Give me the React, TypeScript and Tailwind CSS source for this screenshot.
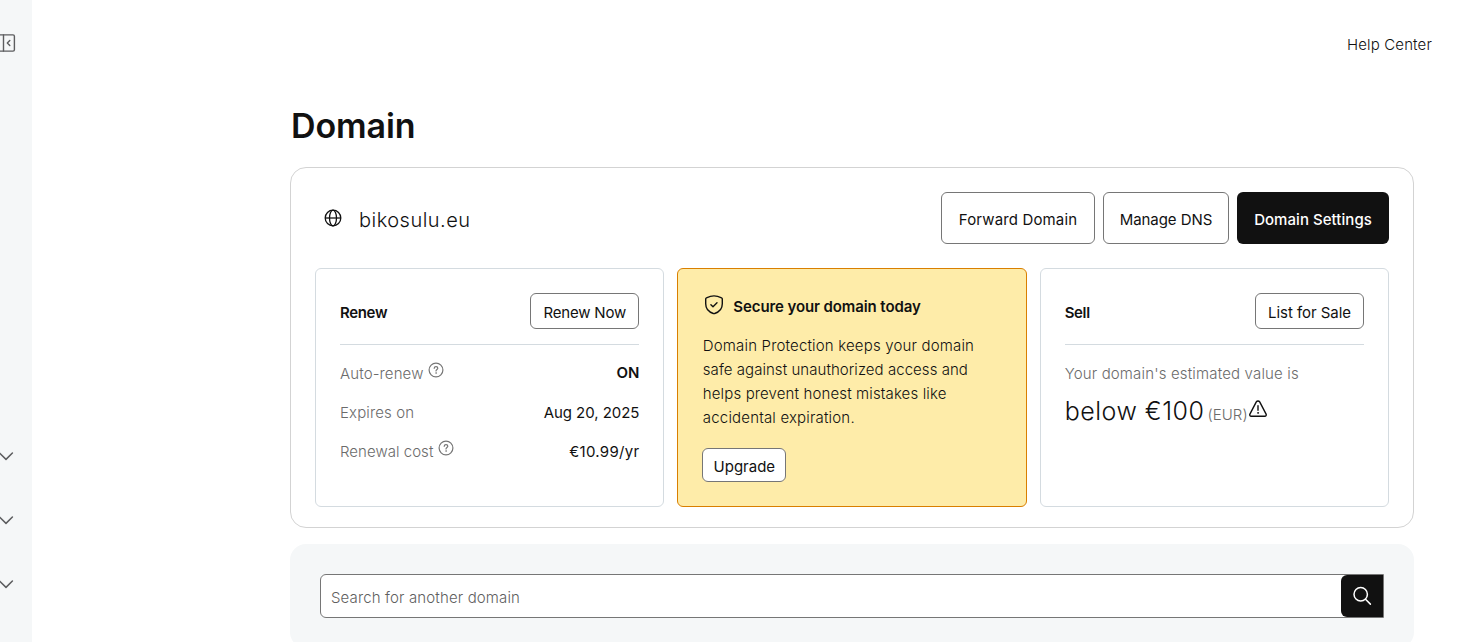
import type { ReactNode } from "react";

function ChevronDown() {
  return (
    <svg className="block" width="14" height="10" viewBox="0 0 14 10" fill="none" stroke="#5c5d5f" strokeWidth="1.5" strokeLinecap="round" strokeLinejoin="round">
      <path d="M-.5 2 6 8.400 12.400 2" />
    </svg>
  );
}

function CollapseIcon() {
  return (
    <svg className="block" width="16" height="18" viewBox="0 0 16 18" fill="none" stroke="#5c5d5f" strokeWidth="1.4" strokeLinecap="round" strokeLinejoin="round">
      <rect x="-3" y=".9" width="17.400" height="16.200" rx="1.400" />
      <path d="M3.500 1v16M9.800 6.500 7.300 9l2.500 2.500" />
    </svg>
  );
}

function GlobeIcon() {
  return (
    <svg className="block shrink-0" width="18" height="18" viewBox="0 0 18 18" fill="none" stroke="#111" strokeWidth="1.300">
      <circle cx="9" cy="9" r="7.800" />
      <ellipse cx="9" cy="9" rx="3.500" ry="7.800" />
      <path d="M1.200 9h15.600" />
    </svg>
  );
}

function QuestionIcon() {
  return (
    <svg className="block shrink-0" width="16" height="16" viewBox="0 0 16 16" fill="none" stroke="#767676" strokeWidth="1.200" strokeLinecap="round" strokeLinejoin="round">
      <circle cx="8" cy="8" r="6.900" />
      <path d="M6.200 6.300C6.300 5.200 7 4.700 8 4.700c1.100 0 1.800.6 1.800 1.500C9.800 7.400 8 7.500 8 8.900" />
      <circle cx="8" cy="11" r=".4" fill="#767676" strokeWidth=".6" />
    </svg>
  );
}

function ShieldIcon() {
  return (
    <svg className="block shrink-0" width="20" height="20" viewBox="0 0 20 20" fill="none" stroke="#111" strokeWidth="1.400" strokeLinecap="round" strokeLinejoin="round">
      <path d="M10 .9c2.600 0 5.200.8 7.600 1.900.5.2.7.6.7 1.100v4.900c0 4.600-3.200 8.300-7.600 9.700a2.400 2.400 0 0 1-1.400 0C4.900 17.100 1.700 13.400 1.700 8.800V3.900c0-.5.2-.9.7-1.100C4.800 1.700 7.400.9 10 .9Z" />
      <path d="m6.900 9.700 2.100 2.100 4-4" />
    </svg>
  );
}

function WarningIcon() {
  return (
    <svg className="block shrink-0" width="20" height="18" viewBox="0 0 20 18" fill="none" stroke="#111" strokeWidth="1.400" strokeLinecap="round" strokeLinejoin="round">
      <path d="M8.300 1.900a2 2 0 0 1 3.400 0l6.400 12.200a1.500 1.500 0 0 1-1.300 2.200H3.200a1.500 1.500 0 0 1-1.300-2.200Z" />
      <path d="M10 5.700v4.600" />
      <circle cx="10" cy="12.900" r=".55" fill="#111" strokeWidth=".6" />
    </svg>
  );
}

function SearchIcon() {
  return (
    <svg className="block" width="20" height="20" viewBox="0 0 20 20" fill="none" stroke="#fff" strokeWidth="1.500" strokeLinecap="round">
      <circle cx="8.700" cy="8.300" r="6.700" />
      <path d="m13.500 13.200 4.900 4.900" />
    </svg>
  );
}

function OutlineButton({ className, children }: { className: string; children: ReactNode }) {
  return (
    <button className={`flex shrink-0 items-center justify-center whitespace-nowrap rounded-md border border-[#767676] bg-white pt-[3px] text-[#111] ${className}`}>
      {children}
    </button>
  );
}

function DetailRow({ label, labelClass, help, value, valueClass }: { label: string; labelClass: string; help?: boolean; value: string; valueClass: string }) {
  return (
    <div className="flex h-[39px] items-center justify-between">
      <div className="flex items-center">
        <span className={`font-light text-[#6b6b6b] ${labelClass}`}>{label}</span>
        {help && (
          <span className="-mt-[7px] ml-[5px]">
            <QuestionIcon />
          </span>
        )}
      </div>
      <span className={valueClass}>{value}</span>
    </div>
  );
}

export default function App() {
  return (
    <div className="flex h-[642px] w-full overflow-hidden bg-white font-['Inter',sans-serif] text-[15px] leading-6 text-[#111]">
      <aside className="flex w-8 shrink-0 flex-col bg-[#f5f7f8] pt-[34px]">
        <CollapseIcon />
        <nav className="mt-[399px] flex flex-col gap-[54px]">
          <ChevronDown />
          <ChevronDown />
          <ChevronDown />
        </nav>
      </aside>

      <div className="flex min-w-0 flex-1 flex-col">
        <header className="flex h-[103px] shrink-0 justify-end pr-[51px] pt-[33px]">
          <a className="font-light tracking-[0.15px]">Help Center</a>
        </header>

        <main className="ml-[258px] flex w-[1124px] shrink-0 flex-col">
          <h1 className="h-11 pl-px text-[34px] font-semibold leading-[45px] tracking-[-0.1px]">Domain</h1>

          <section className="mt-5 h-[361px] rounded-2xl border border-[#d3d3d3] p-6">
            <div className="flex h-[52px] items-center justify-between">
              <div className="flex items-center gap-[17px] pl-[9px]">
                <GlobeIcon />
                <span className="pt-[3px] text-[20px] font-light tracking-[0.48px]">bikosulu.eu</span>
              </div>
              <div className="flex gap-2">
                <OutlineButton className="h-[52px] w-[154px] tracking-[0.14px]">Forward Domain</OutlineButton>
                <OutlineButton className="h-[52px] w-[126px] tracking-[-0.05px]">Manage DNS</OutlineButton>
                <button className="flex h-[52px] w-[152px] items-center justify-center rounded-md bg-[#111] pt-[3px] font-medium tracking-[0.05px] text-white">Domain Settings</button>
              </div>
            </div>

            <div className="mt-6 grid h-[239px] grid-cols-3 gap-[13px]">
              <div className="rounded-md border border-[#d4dbe0] p-6">
                <div className="flex h-[52px] items-start justify-between border-b border-[#d4dbe0]">
                  <h2 className="pt-2 font-semibold tracking-[-0.35px]">Renew</h2>
                  <OutlineButton className="h-9 w-[109px] tracking-[-0.2px]">Renew Now</OutlineButton>
                </div>
                <div className="mt-[9px] flex flex-col">
                  <DetailRow label="Auto-renew" labelClass="tracking-[0.12px]" help value="ON" valueClass="-mt-[2px] font-semibold" />
                  <DetailRow label="Expires on" labelClass="tracking-[0.12px]" value="Aug 20, 2025" valueClass="tracking-[-0.05px]" />
                  <DetailRow label="Renewal cost" labelClass="tracking-[0.04px]" help value="€10.99/yr" valueClass="tracking-[0.28px]" />
                </div>
              </div>

              <div className="rounded-md border border-[#d97f00] bg-[#feeca9] px-6 pt-[22px]">
                <div className="flex items-center gap-[9px] pl-[2px]">
                  <ShieldIcon />
                  <h2 className="pt-1 font-semibold tracking-[-0.1px]">Secure your domain today</h2>
                </div>
                <p className="mt-[15px] whitespace-nowrap pl-[0.5px] font-light">
                  <span className="block tracking-[0.17px]">Domain Protection keeps your domain</span>
                  <span className="block tracking-[0.05px]">safe against unauthorized access and</span>
                  <span className="block tracking-[0.13px]">helps prevent honest mistakes like</span>
                  <span className="block tracking-[0.18px]">accidental expiration.</span>
                </p>
                <OutlineButton className="mt-[18px] h-[34px] w-[84px]">Upgrade</OutlineButton>
              </div>

              <div className="rounded-md border border-[#d4dbe0] p-6">
                <div className="flex h-[52px] items-start justify-between border-b border-[#d4dbe0]">
                  <h2 className="pt-2 font-semibold tracking-[-0.35px]">Sell</h2>
                  <OutlineButton className="h-9 w-[109px] tracking-[-0.05px]">List for Sale</OutlineButton>
                </div>
                <p className="mt-[17px] font-light tracking-[0.16px] text-[#6b6b6b]">Your domain's estimated value is</p>
                <div className="mt-[9px] flex items-start">
                  <p className="flex items-baseline leading-8">
                    <span className="text-[25px] font-light tracking-[0.5px]">below €100</span>
                    <span className="ml-[3px] font-light tracking-[0.1px] text-[#6b6b6b]">(EUR)</span>
                  </p>
                  <span className="mt-[5px]">
                    <WarningIcon />
                  </span>
                </div>
              </div>
            </div>
          </section>

          <section className="mt-4 h-[104px] rounded-2xl bg-[#f5f7f8] p-[30px]">
            <div className="flex h-11 items-stretch justify-between rounded-l-md border border-[#767676] bg-white">
              <span className="pl-[10px] pt-[11px] font-light tracking-[0.14px] text-[#5f5f5f]">Search for another domain</span>
              <button className="flex w-[42px] items-center justify-center rounded-l-md bg-[#111]">
                <SearchIcon />
              </button>
            </div>
          </section>
        </main>
      </div>
    </div>
  );
}
